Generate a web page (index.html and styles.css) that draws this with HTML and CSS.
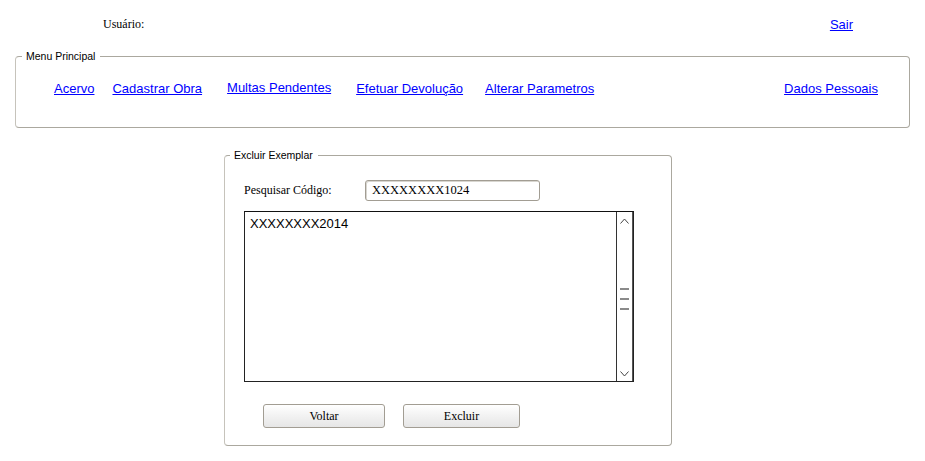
FILE: index.html
```html
<!DOCTYPE html>
<html lang="pt">
<head>
<meta charset="utf-8">
<title>Excluir Exemplar</title>
<link rel="stylesheet" href="styles.css">
</head>
<body>
<div class="top">
  <span class="user">Usuário:</span>
  <a class="link sair" href="#">Sair</a>
</div>
<fieldset class="menu">
  <legend>Menu Principal</legend>
  <nav class="links">
    <a class="link" href="#">Acervo</a>
    <a class="link g18" href="#">Cadastrar Obra</a>
    <a class="link g25 up" href="#">Multas Pendentes</a>
    <a class="link g25" href="#">Efetuar Devolução</a>
    <a class="link g22" href="#">Alterar Parametros</a>
    <a class="link dados" href="#">Dados Pessoais</a>
  </nav>
</fieldset>
<fieldset class="panel">
  <legend>Excluir Exemplar</legend>
  <div class="search">
    <span class="label">Pesquisar Código:</span>
    <div class="input">XXXXXXXX1024</div>
  </div>
  <div class="list">
    <div class="list-body">XXXXXXXX2014</div>
    <div class="scroll">
      <svg class="arrow" width="9" height="6" viewBox="0 0 9 6"><path d="M0.5 5.5 L4.5 1 L8.5 5.5" fill="none" stroke="#444" stroke-width="1"/></svg>
      <div class="grip"><span></span><span></span><span></span></div>
      <svg class="arrow" width="9" height="6" viewBox="0 0 9 6"><path d="M0.5 0.5 L4.5 5 L8.5 0.5" fill="none" stroke="#444" stroke-width="1"/></svg>
    </div>
  </div>
  <div class="buttons">
    <button class="btn voltar">Voltar</button>
    <button class="btn excluir">Excluir</button>
  </div>
</fieldset>
</body>
</html>
```
FILE: styles.css
```css
html, body {
  margin: 0;
  padding: 0;
  background: #fff;
}
body {
  font-family: "Liberation Serif", serif;
  font-size: 12px;
  color: #000;
}
.top {
  display: flex;
  align-items: center;
  height: 50px;
  padding-left: 103px;
  padding-right: 72px;
}
.user {
  font-size: 12px;
  margin-top: -2px;
}
.link {
  font-family: "Liberation Sans", Arial, sans-serif;
  font-size: 13px;
  color: #0000ff;
  text-decoration: underline;
}
.sair {
  margin-left: auto;
  margin-top: -2px;
}
fieldset {
  border: 1px solid #aba89f;
  border-left-color: #c6c3bb;
  border-radius: 4px;
  padding: 0;
  margin: 0;
}
legend {
  font-family: "Liberation Sans", Arial, sans-serif;
  font-size: 10.5px;
  margin-left: 6px;
  padding: 0 5px 0 4px;
  color: #000;
}
.menu {
  margin: 0 15px;
  height: 76px;
}
.links {
  display: flex;
  align-items: center;
  padding: 19px 31px 0 38px;
}
.links .g18 { margin-left: 18px; }
.links .g25 { margin-left: 25px; }
.links .g22 { margin-left: 22px; }
.links .up {
  position: relative;
  top: -1px;
}
.links .dados {
  margin-left: auto;
}
.panel {
  margin: 21px 0 0 224px;
  width: 446px;
  height: 295px;
  box-sizing: content-box;
}
.panel legend {
  margin-left: 5px;
}
.search {
  display: flex;
  align-items: center;
  padding: 19px 0 0 19px;
}
.label {
  width: 121px;
  font-size: 12px;
}
.input {
  box-sizing: border-box;
  width: 175px;
  height: 21px;
  border: 1px solid #a29d93;
  border-radius: 3px;
  padding: 2px 0 0 6px;
  font-size: 12.5px;
  box-shadow: inset 1px 1px 0 #d8d6d0;
}
.list {
  display: flex;
  box-sizing: border-box;
  width: 390px;
  height: 171px;
  margin: 10px 0 0 19px;
  border: 1px solid #222;
  border-top-color: #111;
}
.list-body {
  flex: 1;
  font-family: "Liberation Sans", Arial, sans-serif;
  font-size: 13px;
  padding: 4px 0 0 5px;
}
.scroll {
  width: 15px;
  border-left: 1px solid #333;
  border-right: 1px solid #555;
  display: flex;
  flex-direction: column;
  align-items: center;
  justify-content: space-between;
  padding: 6px 0 4px;
}
.grip {
  display: flex;
  flex-direction: column;
  gap: 8px;
  margin-top: 2px;
}
.grip span {
  display: block;
  width: 9px;
  height: 2px;
  background: #8a8a8a;
}
.buttons {
  display: flex;
  gap: 18px;
  padding: 22px 0 0 38px;
}
.btn {
  box-sizing: border-box;
  height: 24px;
  border: 1px solid #a29d93;
  border-radius: 3px;
  background: linear-gradient(#ffffff, #f3f3f3 45%, #e6e6e6);
  font-family: "Liberation Serif", serif;
  font-size: 12px;
  color: #000;
  padding: 0;
}
.voltar { width: 122px; }
.excluir { width: 117px; }
```
